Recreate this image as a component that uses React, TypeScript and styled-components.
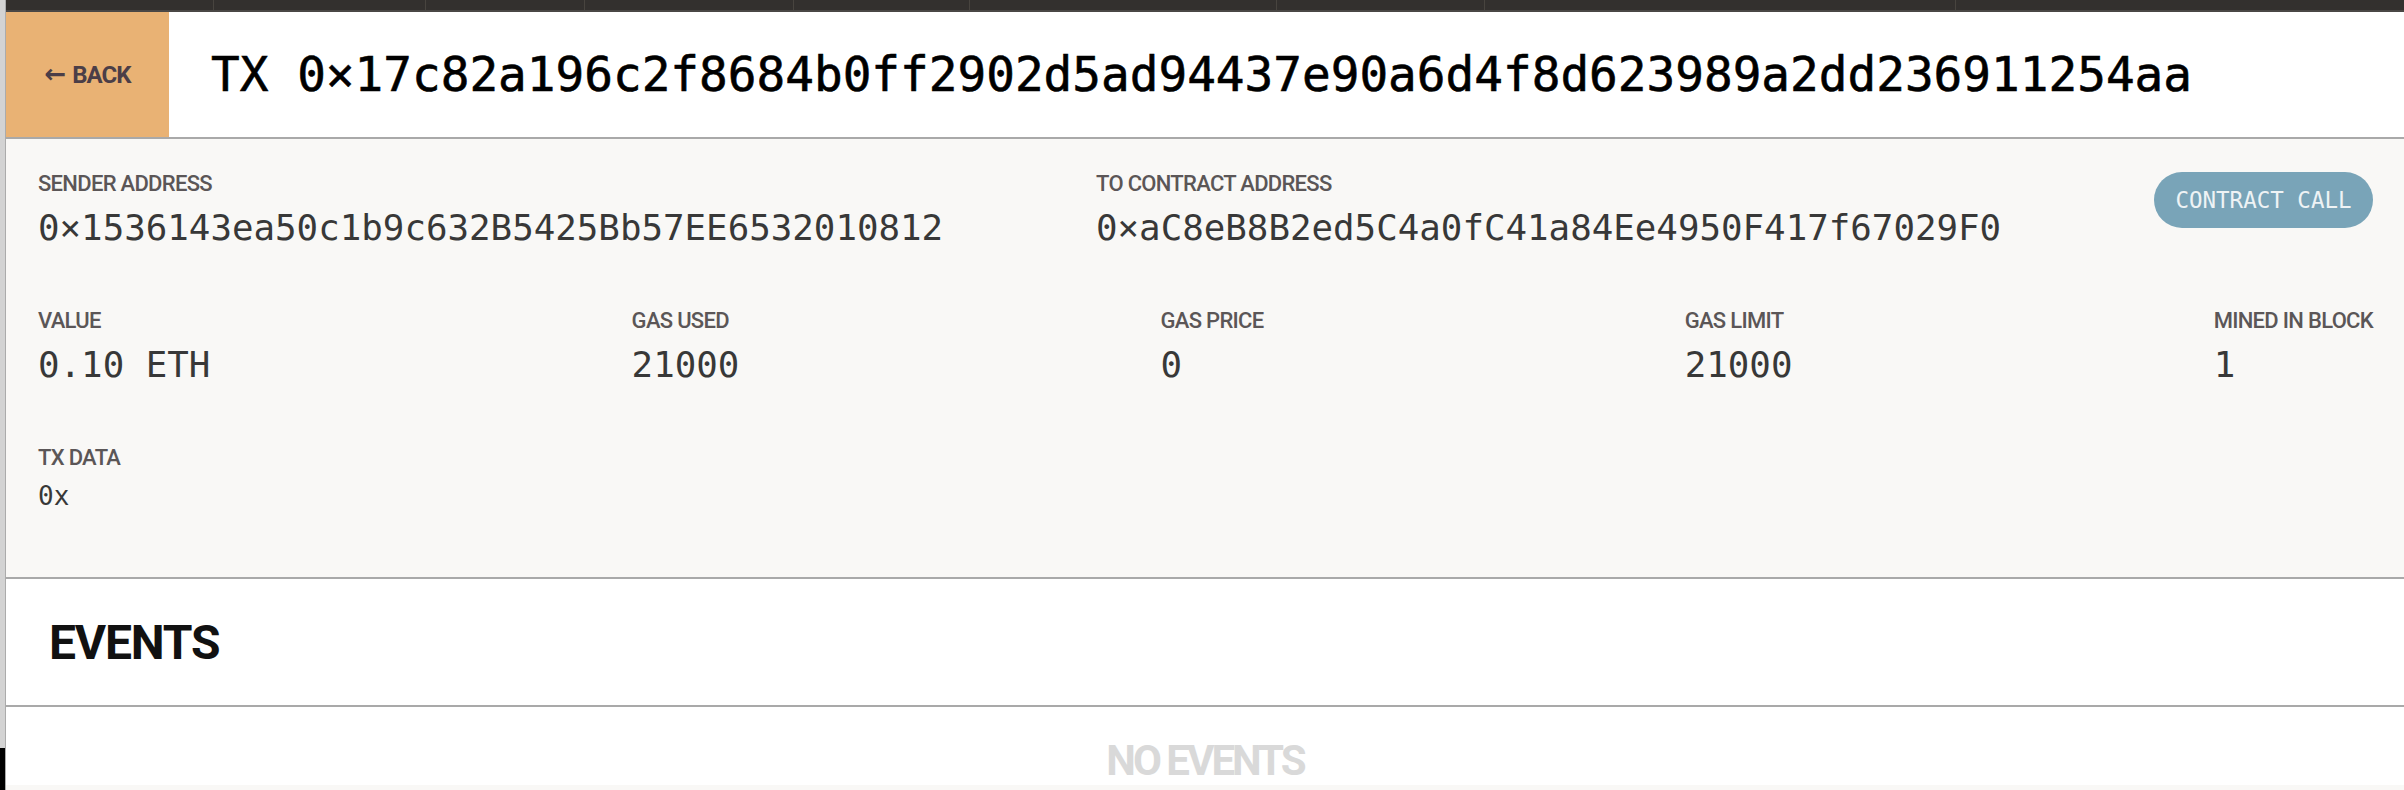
import React from "react";
import styled, { createGlobalStyle } from "styled-components";

const GlobalStyle = createGlobalStyle`
  html, body {
    margin: 0;
    padding: 0;
    height: 100%;
    background: #ffffff;
    overflow: hidden;
  }
  #root {
    height: 100%;
  }
`;

const mono = `"DejaVu Sans Mono", "Liberation Mono", monospace`;
const sans = `"Roboto", "Liberation Sans", sans-serif`;

const Page = styled.div`
  display: flex;
  height: 100vh;
`;

const LeftRail = styled.div`
  width: 6px;
  display: flex;
  flex-direction: column;
  background: #d3d3d3;
  border-right: 1px solid #ababab;
  box-sizing: border-box;
`;

const RailFill = styled.div`
  flex: 1;
`;

const RailFoot = styled.div`
  height: 42px;
  background: #000000;
`;

const Main = styled.div`
  flex: 1;
  display: flex;
  flex-direction: column;
  min-width: 0;
`;

const TopBar = styled.div`
  height: 10px;
  display: flex;
  background: #33302e;
  border-bottom: 2px solid #4a4745;
`;

const TabCell = styled.div<{ $w: number }>`
  width: ${(p) => p.$w}px;
  border-right: 1px solid #48443f;
`;

const Header = styled.header`
  height: 125px;
  display: flex;
  align-items: stretch;
  background: #ffffff;
  border-bottom: 2px solid #a9a9a9;
`;

const BackButton = styled.button`
  width: 163px;
  border: none;
  margin: 0;
  padding: 0;
  background: #e9b274;
  color: #4b3e47;
  font-family: ${sans};
  font-weight: 700;
  font-size: 24px;
  letter-spacing: -1px;
  display: flex;
  align-items: center;
  justify-content: center;
  gap: 7px;
  cursor: pointer;
`;

const Arrow = styled.span`
  font-family: "DejaVu Sans", sans-serif;
  font-size: 26px;
  font-weight: 700;
  margin-top: -2px;
`;

const Title = styled.h1`
  margin: 0;
  padding-left: 42px;
  display: flex;
  align-items: center;
  font-family: ${mono};
  font-weight: 400;
  font-size: 47.7px;
  -webkit-text-stroke: 0.6px #000000;
  color: #000000;
  white-space: nowrap;
`;

const InfoPanel = styled.section`
  height: 440px;
  box-sizing: border-box;
  padding: 32px 31px 0 32px;
  background: #f9f8f6;
  border-bottom: 2px solid #a9a9a9;
  display: flex;
  flex-direction: column;
  gap: 58px;
`;

const Row = styled.div`
  display: flex;
  justify-content: space-between;
  align-items: flex-start;
`;

const Field = styled.div`
  display: flex;
  flex-direction: column;
  gap: 9px;
`;

const Label = styled.div`
  font-family: ${sans};
  font-weight: 500;
  font-size: 22px;
  line-height: 26px;
  letter-spacing: -0.7px;
  color: #5b5657;
  text-transform: uppercase;
  white-space: nowrap;
`;

const Value = styled.div<{ $small?: boolean }>`
  font-family: ${mono};
  font-size: ${(p) => (p.$small ? "26px" : "35.8px")};
  line-height: ${(p) => (p.$small ? "32px" : "44px")};
  color: #383838;
  white-space: nowrap;
`;

const Pill = styled.div`
  height: 56px;
  width: 219px;
  border-radius: 28px;
  background: #79a4b8;
  color: #eef3f5;
  font-family: ${mono};
  font-size: 22.5px;
  display: flex;
  align-items: center;
  justify-content: center;
  margin-top: 1px;
`;

const SectionHeader = styled.div`
  height: 126px;
  display: flex;
  align-items: center;
  padding-left: 43px;
  background: #ffffff;
  border-bottom: 2px solid #a9a9a9;
`;

const SectionTitle = styled.h2`
  margin: 0;
  font-family: ${sans};
  font-weight: 700;
  font-size: 48px;
  letter-spacing: -1.2px;
  color: #111111;
`;

const Empty = styled.div`
  height: 78px;
  box-sizing: border-box;
  padding-top: 32px;
  text-align: center;
  font-family: ${sans};
  font-weight: 700;
  font-size: 42px;
  line-height: 44px;
  letter-spacing: -3px;
  color: #d9d9d9;
  background: #ffffff;
`;

const NextSection = styled.div`
  flex: 1;
  background: #f9f8f6;
`;

const tabs = [207, 211, 158, 208, 175, 306, 207, 470];

const stats = [
  { label: "Value", value: "0.10 ETH" },
  { label: "Gas Used", value: "21000" },
  { label: "Gas Price", value: "0" },
  { label: "Gas Limit", value: "21000" },
  { label: "Mined In Block", value: "1" },
];

export default function App() {
  return (
    <>
      <GlobalStyle />
      <Page>
        <LeftRail>
          <RailFill />
          <RailFoot />
        </LeftRail>
        <Main>
          <TopBar>
            {tabs.map((w, i) => (
              <TabCell key={i} $w={w} />
            ))}
          </TopBar>
          <Header>
            <BackButton>
              <Arrow>←</Arrow>
              <span>BACK</span>
            </BackButton>
            <Title>TX 0×17c82a196c2f8684b0ff2902d5ad94437e90a6d4f8d623989a2dd236911254aa</Title>
          </Header>
          <InfoPanel>
            <Row>
              <Field>
                <Label>Sender Address</Label>
                <Value>0×1536143ea50c1b9c632B5425Bb57EE6532010812</Value>
              </Field>
              <Field>
                <Label>To Contract Address</Label>
                <Value>0×aC8eB8B2ed5C4a0fC41a84Ee4950F417f67029F0</Value>
              </Field>
              <Pill>CONTRACT CALL</Pill>
            </Row>
            <Row>
              {stats.map((s) => (
                <Field key={s.label}>
                  <Label>{s.label}</Label>
                  <Value>{s.value}</Value>
                </Field>
              ))}
            </Row>
            <Row>
              <Field>
                <Label>TX Data</Label>
                <Value $small>0x</Value>
              </Field>
            </Row>
          </InfoPanel>
          <SectionHeader>
            <SectionTitle>EVENTS</SectionTitle>
          </SectionHeader>
          <Empty>NO EVENTS</Empty>
          <NextSection />
        </Main>
      </Page>
    </>
  );
}
